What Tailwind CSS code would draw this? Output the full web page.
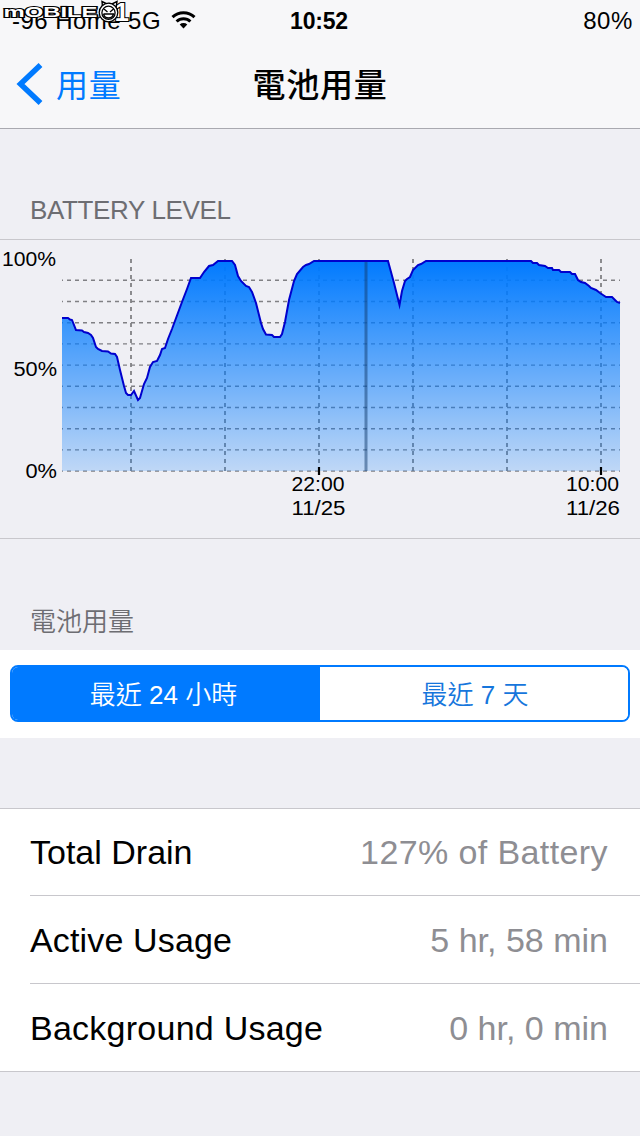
<!DOCTYPE html>
<html lang="zh-Hant">
<head>
  <meta charset="UTF-8">
  <meta name="viewport" content="width=device-width, initial-scale=1.0">
  <title>電池用量</title>
  <script src="https://cdn.jsdelivr.net/npm/@tailwindcss/browser@4"></script>
</head>
<body class="bg-[#efeff4] min-h-screen overflow-hidden text-black font-['Liberation_Sans','Noto_Sans_CJK_TC',sans-serif]">

  <header class="relative h-[129px] bg-[#f7f7f9] border-b border-[#a9a9b0]">
    <!-- Status bar -->
    <div class="grid grid-cols-[1fr_auto_1fr] items-center h-10 pt-0.5 px-2 text-[24px] leading-none">
      <div class="flex items-center gap-[10px] pl-1 whitespace-nowrap">
        <span class="tracking-[0.45px]">-96 Home 5G</span>
        <svg class="w-[25px] h-[18px] -mt-[3px] shrink-0" viewBox="0 0 25 18" fill="none" stroke="#000" stroke-width="3">
          <path d="M1.5 6.2A16 16 0 0 1 23.5 6.2" />
          <path d="M5.6 10.5A10 10 0 0 1 19.4 10.5" />
          <path d="M12.5 17.5L8.7 13.6A5.6 5.6 0 0 1 16.3 13.6Z" fill="#000" stroke="none" />
        </svg>
      </div>
      <span class="font-bold text-[23px] tracking-[-0.2px] -ml-px mr-px">10:52</span>
      <span class="text-right tracking-[0.6px] -mr-px">80%</span>
    </div>

    <!-- Navigation -->
    <nav class="grid grid-cols-[1fr_auto_1fr] items-center h-[88px] px-4">
      <a href="#" class="flex items-center gap-[13px] text-[#007aff]">
        <svg class="w-[27px] h-[42px]" viewBox="0 0 27 42" fill="none" stroke="#007aff" stroke-width="5.5">
          <path d="M24.5 2L4.5 21L24.5 40" />
        </svg>
        <span class="pt-[3px] text-[32px] leading-none font-normal tracking-[0.8px]">用量</span>
      </a>
      <h1 class="pt-[3px] text-[33px] leading-none font-medium tracking-[0.8px]">電池用量</h1>
    </nav>

    <!-- Site watermark -->
    <svg class="absolute left-0 top-0 w-[130px] h-[30px]" viewBox="0 0 130 30">
      <g fill="#fff" stroke="#000" stroke-width="2.2" paint-order="stroke" font-family="Liberation Sans, sans-serif" font-weight="bold">
        <text x="3.5" y="17.3" font-size="14.5" textLength="94" lengthAdjust="spacingAndGlyphs">mOBILE</text>
        <text x="114.5" y="21.3" font-size="26">1</text>
      </g>
      <path d="M102.5 7L102 1.5L107 4Q110 3 112 4L117 1.5L116 8" fill="#fff" stroke="#000" stroke-width="1.4" />
      <circle cx="108.5" cy="12.5" r="9.3" fill="#fff" stroke="#000" stroke-width="1.3" />
      <circle cx="108.5" cy="12.8" r="6.6" fill="#fff" stroke="#000" stroke-width="1.3" />
      <path d="M104 9L107.5 12M113.5 9L110 12M103.5 14H113.5Q112.5 18 108.5 18Q104.5 18 103.5 14" fill="none" stroke="#000" stroke-width="1.3" />
    </svg>
  </header>

  <main>
    <h2 class="flex items-end h-[111px] px-[30px] pb-[14px] border-b border-[#c8c7cc] text-[26px] leading-[30px] tracking-[-0.35px] text-[#6d6d72]">BATTERY LEVEL</h2>

    <!-- Battery level over the last day -->
    <section class="h-[299px] border-b border-[#c8c7cc]">
      <svg class="block w-[640px] h-[298px]" viewBox="0 240 640 298">
        <defs>
          <linearGradient id="level" gradientUnits="userSpaceOnUse" x1="0" y1="260" x2="0" y2="471">
            <stop offset="0" stop-color="#007aff" />
            <stop offset="1" stop-color="#007aff" stop-opacity="0.2" />
          </linearGradient>
        </defs>
        <g stroke="#808084" fill="none">
          <path stroke-width="1.4" stroke-dasharray="4 4" stroke-dashoffset="3" d="M62 280.3H620M62 301.5H620M62 322.7H620M62 343.9H620M62 365.1H620M62 386.3H620M62 407.5H620M62 428.7H620M62 449.9H620M62 471.1H620" />
          <path stroke-width="1.8" stroke-dasharray="4 4" d="M131 259V471M225 259V471M319 259V471M413 259V471M507 259V471M601 259V471" />
        </g>
        <path fill="url(#level)" d="M62 318H68L70 319.5L72 320L76 330L82 330.5L84 332L88 333L91 335L93 338L96 347L98 349L102 351L108 351.5L111 353.5L115 354L117 357L120 370L124 386L126 393L128 395H131L134 391L138 400L140 398L144 384L147 378L150 367L153 362L157 361L160 355L162 349L165 348L168 339L172 329L182 302L187 289L191 278H200L204 272L209 266L213 265L218 261H232L235 265L238 276L241 281L246 286L249 287L252 292L256 303L259 315L261 323L263 329L266 334.5L272 335L274 337H280L282 334L285 322L289 300L294 281L297 274L303 267L306 265L309 264L314 261H388L394 283L399.5 305L402 291L405 281L407 279L410 277L413 270L418 265L421 264L426 261H531L533 263H537L539 265L545 266L548 268H552L553 270H559L561 272H570L572 274H575L578 280L581 282L585 283L589 286L591 288L596 290L600 293L603 295L606 297H612L615 300L617 302L620 303V471H62Z" />
        <path d="M366 260V471" stroke="#123c6e" stroke-opacity="0.5" stroke-width="3" />
        <path fill="none" stroke="#0000cd" stroke-width="2" stroke-miterlimit="10" d="M62 318H68L70 319.5L72 320L76 330L82 330.5L84 332L88 333L91 335L93 338L96 347L98 349L102 351L108 351.5L111 353.5L115 354L117 357L120 370L124 386L126 393L128 395H131L134 391L138 400L140 398L144 384L147 378L150 367L153 362L157 361L160 355L162 349L165 348L168 339L172 329L182 302L187 289L191 278H200L204 272L209 266L213 265L218 261H232L235 265L238 276L241 281L246 286L249 287L252 292L256 303L259 315L261 323L263 329L266 334.5L272 335L274 337H280L282 334L285 322L289 300L294 281L297 274L303 267L306 265L309 264L314 261H388L394 283L399.5 305L402 291L405 281L407 279L410 277L413 270L418 265L421 264L426 261H531L533 263H537L539 265L545 266L548 268H552L553 270H559L561 272H570L572 274H575L578 280L581 282L585 283L589 286L591 288L596 290L600 293L603 295L606 297H612L615 300L617 302L620 303" />
        <path d="M319 467V475M601 467V475" stroke="#000" stroke-width="2.2" />
        <g class="text-[20px]" fill="#000">
          <text x="2" y="266" textLength="54" lengthAdjust="spacingAndGlyphs">100%</text>
          <text x="13.5" y="376" textLength="43.5" lengthAdjust="spacingAndGlyphs">50%</text>
          <text x="25.5" y="478" textLength="31.5" lengthAdjust="spacingAndGlyphs">0%</text>
          <text x="291.5" y="491" textLength="53" lengthAdjust="spacingAndGlyphs">22:00</text>
          <text x="291.5" y="515" textLength="54" lengthAdjust="spacingAndGlyphs">11/25</text>
          <text x="566" y="491" textLength="53" lengthAdjust="spacingAndGlyphs">10:00</text>
          <text x="566" y="515" textLength="54" lengthAdjust="spacingAndGlyphs">11/26</text>
        </g>
      </svg>
    </section>

    <h2 class="flex items-end h-[111px] px-[30px] pb-[13px] text-[26px] leading-[30px] font-[350] text-[#6d6d72]">電池用量</h2>

    <div class="h-[88px] bg-white px-2.5 pt-[15px]">
      <div class="grid grid-cols-2 h-[57px] border-2 border-[#007aff] rounded-lg overflow-hidden text-[26px] font-[350]">
        <button class="bg-[#007aff] text-white pt-[3px] pr-[5px]">最近 24 小時</button>
        <button class="bg-white text-[#1676dc] pt-[3px] pl-0.5">最近 7 天</button>
      </div>
    </div>

    <dl class="mt-[70px] bg-white border-y border-[#c8c7cc] pl-[30px] text-[34px] leading-none">
      <div class="flex items-center justify-between h-[87px] border-b border-[#c8c7cc] pr-8">
        <dt>Total Drain</dt>
        <dd class="text-[#8e8e93] tracking-[0.4px]">127% of Battery</dd>
      </div>
      <div class="flex items-center justify-between h-[88px] border-b border-[#c8c7cc] pr-8">
        <dt class="tracking-[0.15px]">Active Usage</dt>
        <dd class="text-[#8e8e93]">5 hr, 58 min</dd>
      </div>
      <div class="flex items-center justify-between h-[87px] pr-8">
        <dt class="tracking-[0.25px]">Background Usage</dt>
        <dd class="text-[#8e8e93]">0 hr, 0 min</dd>
      </div>
    </dl>
  </main>

</body>
</html>
